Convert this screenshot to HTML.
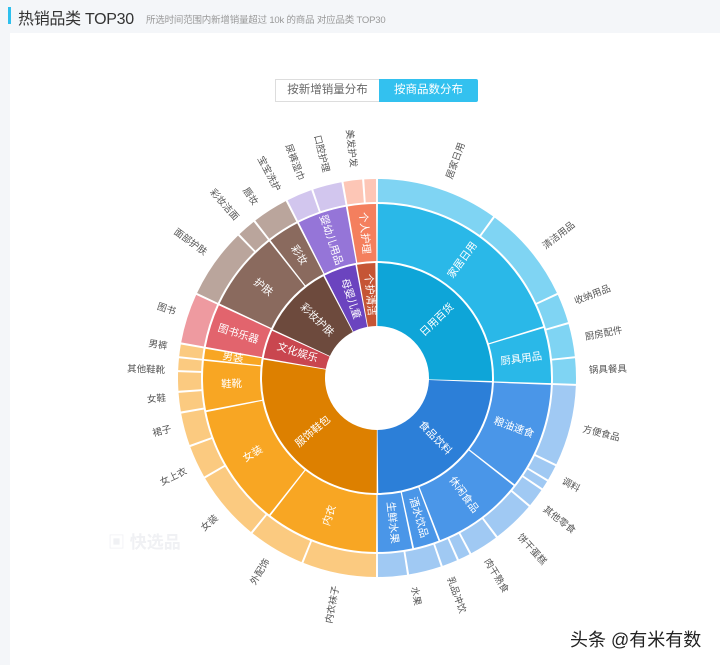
<!DOCTYPE html>
<html><head><meta charset="utf-8">
<style>
html,body{margin:0;padding:0;width:720px;height:665px;overflow:hidden;background:#f4f6f9;font-family:"Liberation Sans","Noto Sans CJK SC",sans-serif;}
.bar{position:absolute;left:8px;top:7px;width:3px;height:17px;background:#2ec0ee;}
.title{position:absolute;left:18px;top:5px;font-size:16px;color:#333;white-space:nowrap;letter-spacing:-0.3px;}
.sub{position:absolute;left:146px;top:12px;font-size:9.5px;color:#999;white-space:nowrap;letter-spacing:-0.2px;}
.card{position:absolute;left:10px;top:33px;width:710px;height:632px;background:#fff;}
.btn1{position:absolute;left:275px;top:79px;width:104px;height:23px;border:1px solid #ddd;border-right:none;box-sizing:border-box;font-size:11.5px;color:#666;text-align:center;line-height:21px;background:#fff;}
.btn2{position:absolute;left:379px;top:79px;width:99px;height:23px;background:#33c1ef;font-size:11.5px;color:#fff;text-align:center;line-height:23px;border-radius:0 2px 2px 0;}
svg{position:absolute;left:0;top:0;}
.i text{font-size:10.5px;fill:#fff;text-anchor:middle;dominant-baseline:central;}
.o text{font-size:9.5px;fill:#555;dominant-baseline:central;}
.wm{position:absolute;left:108px;top:528px;font-size:17px;color:#f0f1f4;font-weight:bold;}
.tt{position:absolute;left:570px;top:626px;font-size:18px;color:#222;white-space:nowrap;}
</style></head><body>
<div class="bar"></div>
<div class="title">热销品类 TOP30</div>
<div class="sub">所选时间范围内新增销量超过 10k 的商品 对应品类 TOP30</div>
<div class="card"></div>
<div class="btn1">按新增销量分布</div>
<div class="btn2">按商品数分布</div>
<div class="wm">▣ 快选品</div>
<svg width="720" height="665" viewBox="0 0 720 665">
<g transform="translate(377,378) rotate(-90)" fill="none">
<g stroke-width="63">
<circle r="83.5" pathLength="360" stroke="#0ea5d8" stroke-dasharray="91.2 400" stroke-dashoffset="-0.4"/>
<circle r="83.5" pathLength="360" stroke="#2c7fd8" stroke-dasharray="87.2 400" stroke-dashoffset="-92.4"/>
<circle r="83.5" pathLength="360" stroke="#dd8000" stroke-dasharray="99.2 400" stroke-dashoffset="-180.4"/>
<circle r="83.5" pathLength="360" stroke="#c9464f" stroke-dasharray="14.2 400" stroke-dashoffset="-280.4"/>
<circle r="83.5" pathLength="360" stroke="#6d4a3d" stroke-dasharray="37.2 400" stroke-dashoffset="-295.4"/>
<circle r="83.5" pathLength="360" stroke="#6b44bf" stroke-dasharray="16.2 400" stroke-dashoffset="-333.4"/>
<circle r="83.5" pathLength="360" stroke="#c55535" stroke-dasharray="9.2 400" stroke-dashoffset="-350.4"/>
</g>
<g stroke-width="57">
<circle r="145.5" pathLength="360" stroke="#2ab8e8" stroke-dasharray="72.4 400" stroke-dashoffset="-0.3"/>
<circle r="145.5" pathLength="360" stroke="#2ab8e8" stroke-dasharray="18.4 400" stroke-dashoffset="-73.3"/>
<circle r="145.5" pathLength="360" stroke="#4a96e8" stroke-dasharray="35.4 400" stroke-dashoffset="-92.3"/>
<circle r="145.5" pathLength="360" stroke="#4a96e8" stroke-dasharray="30.4 400" stroke-dashoffset="-128.3"/>
<circle r="145.5" pathLength="360" stroke="#4a96e8" stroke-dasharray="8.4 400" stroke-dashoffset="-159.3"/>
<circle r="145.5" pathLength="360" stroke="#4a96e8" stroke-dasharray="11.4 400" stroke-dashoffset="-168.3"/>
<circle r="145.5" pathLength="360" stroke="#f8a623" stroke-dasharray="37.4 400" stroke-dashoffset="-180.3"/>
<circle r="145.5" pathLength="360" stroke="#f8a623" stroke-dasharray="40.4 400" stroke-dashoffset="-218.3"/>
<circle r="145.5" pathLength="360" stroke="#f8a623" stroke-dasharray="16.4 400" stroke-dashoffset="-259.3"/>
<circle r="145.5" pathLength="360" stroke="#f8a623" stroke-dasharray="3.4 400" stroke-dashoffset="-276.3"/>
<circle r="145.5" pathLength="360" stroke="#e2646d" stroke-dasharray="14.4 400" stroke-dashoffset="-280.3"/>
<circle r="145.5" pathLength="360" stroke="#8a6a5e" stroke-dasharray="26.4 400" stroke-dashoffset="-295.3"/>
<circle r="145.5" pathLength="360" stroke="#8a6a5e" stroke-dasharray="10.4 400" stroke-dashoffset="-322.3"/>
<circle r="145.5" pathLength="360" stroke="#9575d8" stroke-dasharray="16.4 400" stroke-dashoffset="-333.3"/>
<circle r="145.5" pathLength="360" stroke="#f47f5e" stroke-dasharray="9.4 400" stroke-dashoffset="-350.3"/>
</g>
<g stroke-width="23">
<circle r="187.5" pathLength="360" stroke="#7fd4f3" stroke-dasharray="35.4 400" stroke-dashoffset="-0.3"/>
<circle r="187.5" pathLength="360" stroke="#7fd4f3" stroke-dasharray="28.4 400" stroke-dashoffset="-36.3"/>
<circle r="187.5" pathLength="360" stroke="#7fd4f3" stroke-dasharray="8.4 400" stroke-dashoffset="-65.3"/>
<circle r="187.5" pathLength="360" stroke="#7fd4f3" stroke-dasharray="9.4 400" stroke-dashoffset="-74.3"/>
<circle r="187.5" pathLength="360" stroke="#7fd4f3" stroke-dasharray="7.4 400" stroke-dashoffset="-84.3"/>
<circle r="187.5" pathLength="360" stroke="#a0c9f3" stroke-dasharray="23.4 400" stroke-dashoffset="-92.3"/>
<circle r="187.5" pathLength="360" stroke="#a0c9f3" stroke-dasharray="4.4 400" stroke-dashoffset="-116.3"/>
<circle r="187.5" pathLength="360" stroke="#a0c9f3" stroke-dasharray="2.4 400" stroke-dashoffset="-121.3"/>
<circle r="187.5" pathLength="360" stroke="#a0c9f3" stroke-dasharray="5.4 400" stroke-dashoffset="-124.3"/>
<circle r="187.5" pathLength="360" stroke="#a0c9f3" stroke-dasharray="12.4 400" stroke-dashoffset="-130.3"/>
<circle r="187.5" pathLength="360" stroke="#a0c9f3" stroke-dasharray="8.4 400" stroke-dashoffset="-143.3"/>
<circle r="187.5" pathLength="360" stroke="#a0c9f3" stroke-dasharray="3.4 400" stroke-dashoffset="-152.3"/>
<circle r="187.5" pathLength="360" stroke="#a0c9f3" stroke-dasharray="4.4 400" stroke-dashoffset="-156.3"/>
<circle r="187.5" pathLength="360" stroke="#a0c9f3" stroke-dasharray="9.4 400" stroke-dashoffset="-161.3"/>
<circle r="187.5" pathLength="360" stroke="#a0c9f3" stroke-dasharray="8.4 400" stroke-dashoffset="-171.3"/>
<circle r="187.5" pathLength="360" stroke="#fbca80" stroke-dasharray="21.4 400" stroke-dashoffset="-180.3"/>
<circle r="187.5" pathLength="360" stroke="#fbca80" stroke-dasharray="16.4 400" stroke-dashoffset="-202.3"/>
<circle r="187.5" pathLength="360" stroke="#fbca80" stroke-dasharray="20.4 400" stroke-dashoffset="-219.3"/>
<circle r="187.5" pathLength="360" stroke="#fbca80" stroke-dasharray="9.4 400" stroke-dashoffset="-240.3"/>
<circle r="187.5" pathLength="360" stroke="#fbca80" stroke-dasharray="9.4 400" stroke-dashoffset="-250.3"/>
<circle r="187.5" pathLength="360" stroke="#fbca80" stroke-dasharray="5.4 400" stroke-dashoffset="-260.3"/>
<circle r="187.5" pathLength="360" stroke="#fbca80" stroke-dasharray="5.4 400" stroke-dashoffset="-266.3"/>
<circle r="187.5" pathLength="360" stroke="#fbca80" stroke-dasharray="3.4 400" stroke-dashoffset="-272.3"/>
<circle r="187.5" pathLength="360" stroke="#fbca80" stroke-dasharray="3.4 400" stroke-dashoffset="-276.3"/>
<circle r="187.5" pathLength="360" stroke="#ee9aa0" stroke-dasharray="14.4 400" stroke-dashoffset="-280.3"/>
<circle r="187.5" pathLength="360" stroke="#baa59c" stroke-dasharray="20.4 400" stroke-dashoffset="-295.3"/>
<circle r="187.5" pathLength="360" stroke="#baa59c" stroke-dasharray="5.4 400" stroke-dashoffset="-316.3"/>
<circle r="187.5" pathLength="360" stroke="#baa59c" stroke-dasharray="10.4 400" stroke-dashoffset="-322.3"/>
<circle r="187.5" pathLength="360" stroke="#d2c6ee" stroke-dasharray="7.4 400" stroke-dashoffset="-333.3"/>
<circle r="187.5" pathLength="360" stroke="#d2c6ee" stroke-dasharray="8.4 400" stroke-dashoffset="-341.3"/>
<circle r="187.5" pathLength="360" stroke="#fdc6b6" stroke-dasharray="5.4 400" stroke-dashoffset="-350.3"/>
<circle r="187.5" pathLength="360" stroke="#fdc6b6" stroke-dasharray="3.4 400" stroke-dashoffset="-356.3"/>
</g>
</g>
<g transform="translate(377,378)">
<g class="i">
<g transform="rotate(46) translate(0,-83.5) rotate(-90)"><text>日用百货</text></g>
<g transform="rotate(136) translate(0,-83.5) rotate(-90)"><text>食品饮料</text></g>
<g transform="rotate(230) translate(0,-83.5) rotate(90)"><text>服饰鞋包</text></g>
<g transform="rotate(287.5) translate(0,-83.5) rotate(90)"><text>文化娱乐</text></g>
<g transform="rotate(314) translate(0,-83.5) rotate(90)"><text>彩妆护肤</text></g>
<g transform="rotate(341.5) translate(0,-83.5) rotate(90)"><text>母婴儿童</text></g>
<g transform="rotate(355) translate(0,-83.5) rotate(90)"><text>个护清洁</text></g>
<g transform="rotate(36) translate(0,-145.5) rotate(-90)"><text>家居日用</text></g>
<g transform="rotate(82.5) translate(0,-145.5) rotate(-90)"><text>厨具用品</text></g>
<g transform="rotate(110) translate(0,-145.5) rotate(-90)"><text>粮油速食</text></g>
<g transform="rotate(143.5) translate(0,-145.5) rotate(-90)"><text>休闲食品</text></g>
<g transform="rotate(163.5) translate(0,-145.5) rotate(-90)"><text>酒水饮品</text></g>
<g transform="rotate(174) translate(0,-145.5) rotate(-90)"><text>生鲜水果</text></g>
<g transform="rotate(199) translate(0,-145.5) rotate(90)"><text>内衣</text></g>
<g transform="rotate(238.5) translate(0,-145.5) rotate(90)"><text>女装</text></g>
<g transform="rotate(267.5) translate(0,-145.5) rotate(90)"><text>鞋靴</text></g>
<g transform="rotate(278) translate(0,-145.5) rotate(90)"><text>男装</text></g>
<g transform="rotate(287.5) translate(0,-145.5) rotate(90)"><text>图书乐器</text></g>
<g transform="rotate(308.5) translate(0,-145.5) rotate(90)"><text>护肤</text></g>
<g transform="rotate(327.5) translate(0,-145.5) rotate(90)"><text>彩妆</text></g>
<g transform="rotate(341.5) translate(0,-145.5) rotate(90)"><text>婴幼儿用品</text></g>
<g transform="rotate(355) translate(0,-145.5) rotate(90)"><text>个人护理</text></g>
</g>
<g class="o">
<g transform="rotate(20) translate(0,-212) rotate(-90)"><text>居家日用</text></g>
<g transform="rotate(52) translate(0,-212) rotate(-90)"><text>清洁用品</text></g>
<g transform="rotate(69) translate(0,-212) rotate(-90)"><text>收纳用品</text></g>
<g transform="rotate(79) translate(0,-212) rotate(-90)"><text>厨房配件</text></g>
<g transform="rotate(88) translate(0,-212) rotate(-90)"><text>锅具餐具</text></g>
<g transform="rotate(104) translate(0,-212) rotate(-90)"><text>方便食品</text></g>
<g transform="rotate(119) translate(0,-212) rotate(-90)"><text>调料</text></g>
<g transform="rotate(128) translate(0,-212) rotate(-90)"><text>其他零食</text></g>
<g transform="rotate(138) translate(0,-212) rotate(-90)"><text>饼干蛋糕</text></g>
<g transform="rotate(149) translate(0,-212) rotate(-90)"><text>肉干熟食</text></g>
<g transform="rotate(160) translate(0,-212) rotate(-90)"><text>乳品冲饮</text></g>
<g transform="rotate(170) translate(0,-212) rotate(-90)"><text>水果</text></g>
<g transform="rotate(191) translate(0,-212) rotate(90)"><text text-anchor="end">内衣袜子</text></g>
<g transform="rotate(211) translate(0,-212) rotate(90)"><text text-anchor="end">外配饰</text></g>
<g transform="rotate(229) translate(0,-212) rotate(90)"><text text-anchor="end">女装</text></g>
<g transform="rotate(244) translate(0,-212) rotate(90)"><text text-anchor="end">女上衣</text></g>
<g transform="rotate(256) translate(0,-212) rotate(90)"><text text-anchor="end">裙子</text></g>
<g transform="rotate(264.5) translate(0,-212) rotate(90)"><text text-anchor="end">女鞋</text></g>
<g transform="rotate(272) translate(0,-212) rotate(90)"><text text-anchor="end">其他鞋靴</text></g>
<g transform="rotate(278.5) translate(0,-212) rotate(90)"><text text-anchor="end">男裤</text></g>
<g transform="rotate(288) translate(0,-212) rotate(90)"><text text-anchor="end">图书</text></g>
<g transform="rotate(306) translate(0,-212) rotate(90)"><text text-anchor="end">面部护肤</text></g>
<g transform="rotate(318.5) translate(0,-212) rotate(90)"><text text-anchor="end">彩妆洁面</text></g>
<g transform="rotate(325) translate(0,-212) rotate(90)"><text text-anchor="end">唇妆</text></g>
<g transform="rotate(332) translate(0,-212) rotate(90)"><text text-anchor="end">宝宝洗护</text></g>
<g transform="rotate(339) translate(0,-212) rotate(90)"><text text-anchor="end">尿裤湿巾</text></g>
<g transform="rotate(346) translate(0,-212) rotate(90)"><text text-anchor="end">口腔护理</text></g>
<g transform="rotate(353.5) translate(0,-212) rotate(90)"><text text-anchor="end">美发护发</text></g>
</g>
</g>
</svg>
<div class="tt">头条 @有米有数</div>
</body></html>
